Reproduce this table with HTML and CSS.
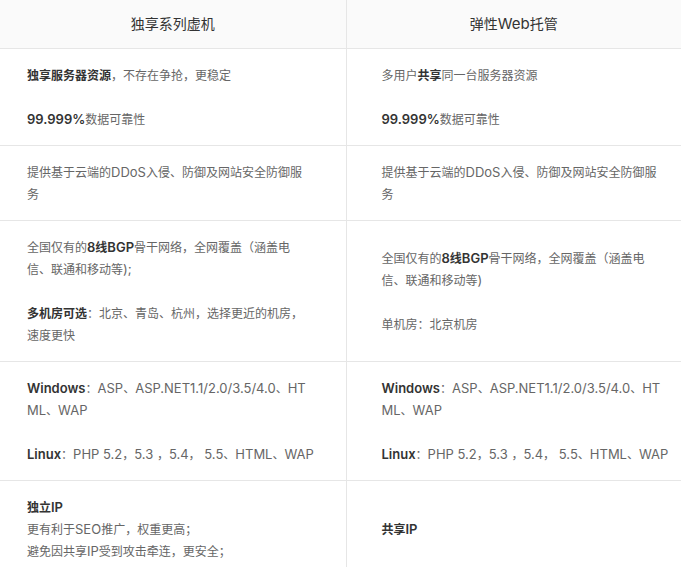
FILE: index.html
```html
<!DOCTYPE html>
<html lang="zh-CN">
<head>
<meta charset="utf-8">
<title>独享系列虚机 vs 弹性Web托管</title>
<link rel="stylesheet" href="styles.css">
</head>
<body>
<table class="compare">
  <colgroup><col class="col-a"><col class="col-b"></colgroup>
  <thead>
    <tr><th>独享系列虚机</th><th>弹性<span class="en">Web</span>托管</th></tr>
  </thead>
  <tbody>
    <tr>
      <td><p><b>独享服务器资源</b>，不存在争抢，更稳定</p><p class="gap"><b class="en">99.999%</b>数据可靠性</p></td>
      <td><p>多用户<b>共享</b>同一台服务器资源</p><p class="gap"><b class="en">99.999%</b>数据可靠性</p></td>
    </tr>
    <tr>
      <td><p>提供基于云端的<span class="en">DDoS</span>入侵、防御及网站安全防御服<br>务</p></td>
      <td><p>提供基于云端的<span class="en">DDoS</span>入侵、防御及网站安全防御服<br>务</p></td>
    </tr>
    <tr>
      <td><p>全国仅有的<b><span class="en">8</span>线<span class="en">BGP</span></b>骨干网络，全网覆盖（涵盖电<br>信、联通和移动等<span class="en">);</span></p><p class="gap"><b>多机房可选</b>：北京、青岛、杭州，选择更近的机房，<br>速度更快</p></td>
      <td><p>全国仅有的<b><span class="en">8</span>线<span class="en">BGP</span></b>骨干网络，全网覆盖（涵盖电<br>信、联通和移动等<span class="en">)</span></p><p class="gap">单机房：北京机房</p></td>
    </tr>
    <tr>
      <td><p><b class="en">Windows</b>：<span class="en">ASP</span>、<span class="en">ASP.NET1.1/2.0/3.5/4.0</span>、<span class="en">HT<br>ML</span>、<span class="en">WAP</span></p><p class="gap"><b class="en">Linux</b>：<span class="en">PHP 5.2</span>，<span class="en">5.3 </span>，<span class="en">5.4</span>，<span class="en"> 5.5</span>、<span class="en">HTML</span>、<span class="en">WAP</span></p></td>
      <td><p><b class="en">Windows</b>：<span class="en">ASP</span>、<span class="en">ASP.NET1.1/2.0/3.5/4.0</span>、<span class="en">HT<br>ML</span>、<span class="en">WAP</span></p><p class="gap"><b class="en">Linux</b>：<span class="en">PHP 5.2</span>，<span class="en">5.3 </span>，<span class="en">5.4</span>，<span class="en"> 5.5</span>、<span class="en">HTML</span>、<span class="en">WAP</span></p></td>
    </tr>
    <tr>
      <td><p><b>独立<span class="en">IP</span></b></p><p>更有利于<span class="en">SEO</span>推广，权重更高；</p><p>避免因共享<span class="en">IP</span>受到攻击牵连，更安全；</p></td>
      <td><p><b>共享<span class="en">IP</span></b></p></td>
    </tr>
  </tbody>
</table>
</body>
</html>
```

FILE: styles.css
```css
html, body {
  margin: 0;
  padding: 0;
  background: #ffffff;
}

body {
  font-family: Inter, "Noto Sans CJK SC", sans-serif;
  font-size: 12px;
  color: #666666;
}

.compare {
  width: 681px;
  border-collapse: collapse;
  table-layout: fixed;
}

.col-a { width: 346px; }
.col-b { width: 335px; }

.compare th {
  height: 46px;
  padding: 0 0 2px;
  background: #fafafa;
  font-size: 14px;
  font-weight: normal;
  color: #333333;
  text-align: center;
  vertical-align: middle;
  border-bottom: 1px solid #e6e6e6;
}

.compare th .en {
  font-size: 15px;
  line-height: 18px;
}

.compare td {
  padding: 16px 20px 14px 27px;
  vertical-align: middle;
  border-bottom: 1px solid #e6e6e6;
  line-height: 22px;
}

.compare th:first-child,
.compare td:first-child {
  border-right: 1px solid #e6e6e6;
}

.compare td:last-child {
  padding-left: 35px;
  padding-right: 4px;
}

.compare p {
  margin: 0;
}

.compare p.gap {
  margin-top: 22px;
}

.compare b {
  font-weight: 600;
  color: #333333;
}

.compare td .en {
  font-size: 13px;
  line-height: 16px;
}
```
